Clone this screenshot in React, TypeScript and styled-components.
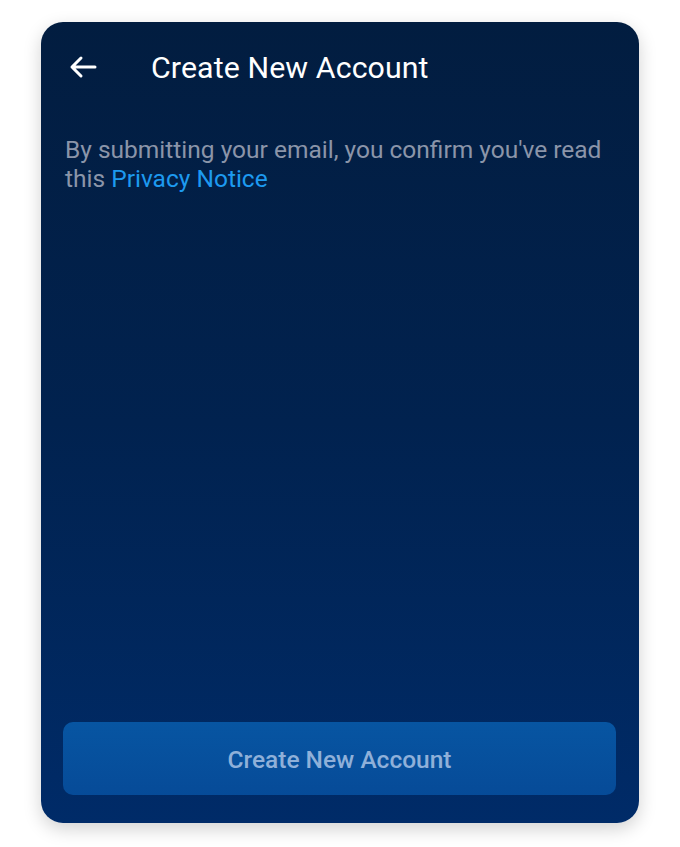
import React from "react";
import styled, { createGlobalStyle } from "styled-components";

const Global = createGlobalStyle`
  html, body { margin: 0; padding: 0; background: #ffffff; }
  body { font-family: Roboto, "Noto Sans", Arial, sans-serif; }
`;

const Page = styled.div`
  padding: 22px 41px 24px 41px;
`;

const Card = styled.div`
  width: 598px;
  height: 801px;
  box-sizing: border-box;
  border-radius: 22px;
  background: linear-gradient(180deg, #021d40 0%, #01224f 50%, #002b68 100%);
  box-shadow: 0 6px 18px rgba(0, 0, 0, 0.18);
  display: flex;
  flex-direction: column;
  padding: 0 23px 28px 22px;
  overflow: hidden;
`;

const Header = styled.div`
  display: flex;
  align-items: center;
  height: 90px;
  padding-left: 6px;
  gap: 54px;
`;

const BackButton = styled.button`
  background: none;
  border: none;
  padding: 0;
  width: 28px;
  height: 28px;
  display: flex;
  align-items: center;
  justify-content: center;
  cursor: pointer;
`;

const Title = styled.h1`
  margin: 0;
  font-size: 30.3px;
  font-weight: 400;
  color: #ffffff;
  letter-spacing: 0.1px;
`;

const Notice = styled.p`
  margin: 23px 0 0 2px;
  font-size: 24.5px;
  line-height: 29px;
  color: #8b95a9;
`;

const Link = styled.a`
  color: #1d9af0;
  text-decoration: none;
`;

const Spacer = styled.div`
  flex: 1;
`;

const PrimaryButton = styled.button`
  height: 73px;
  width: 100%;
  border: none;
  border-radius: 10px;
  background: linear-gradient(180deg, #0755a2 0%, #064b98 100%);
  color: #8fb0d9;
  font-family: Roboto, "Noto Sans", Arial, sans-serif;
  font-size: 24.5px;
  font-weight: 500;
  padding-top: 3px;
  cursor: pointer;
`;

const ArrowIcon = () => (
  <svg width="28" height="24" viewBox="0 0 28 24" fill="none">
    <path
      d="M26 12H3M12 3L3 12L12 21"
      stroke="#ffffff"
      strokeWidth="3"
      strokeLinecap="round"
      strokeLinejoin="round"
    />
  </svg>
);

export default function App() {
  return (
    <>
      <Global />
      <Page>
        <Card>
          <Header>
            <BackButton aria-label="Back">
              <ArrowIcon />
            </BackButton>
            <Title>Create New Account</Title>
          </Header>
          <Notice>
            By submitting your email, you confirm you've read this{" "}
            <Link href="#">Privacy Notice</Link>
          </Notice>
          <Spacer />
          <PrimaryButton>Create New Account</PrimaryButton>
        </Card>
      </Page>
    </>
  );
}
